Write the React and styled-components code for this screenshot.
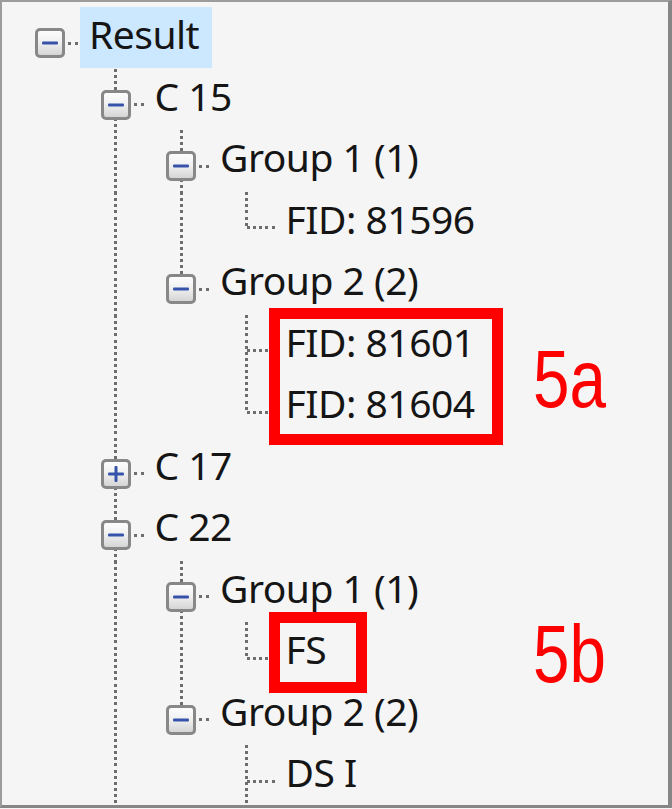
import React from "react";
import styled, { createGlobalStyle, css } from "styled-components";

const Global = createGlobalStyle`
  html, body { margin: 0; padding: 0; background: #f5f5f5; }
  #root { width: 672px; height: 809px; }
`;

const CELL = 65.5;
const ROW_H = 61.5;
const LINE_Y = 36;
const DOT = "#6e6e6e";

const vDots = css`
  background: repeating-linear-gradient(to bottom, ${DOT} 0 3px, transparent 3px 6.15px);
`;
const hDots = css`
  background: repeating-linear-gradient(to right, ${DOT} 0 3px, transparent 3px 6.15px);
`;

const Panel = styled.div`
  position: relative;
  box-sizing: border-box;
  width: 672px;
  height: 808px;
  overflow: hidden;
  background: #f5f5f5;
  border-style: solid;
  border-color: #9c9c9c #868686 #868686 #9c9c9c;
  border-width: 2px 4px 3px 2px;
  padding: 5px 0 0 15.25px;
`;

const Tree = styled.div`
  display: flex;
  flex-direction: column;
`;

const Row = styled.div`
  display: flex;
  height: ${ROW_H}px;
  flex: none;
`;

const Guide = styled.div`
  position: relative;
  width: ${CELL}px;
  flex: none;
  ${(p) =>
    p.$line &&
    css`
      &::before {
        content: "";
        position: absolute;
        left: ${CELL / 2 - 1.5}px;
        top: 0;
        bottom: 0;
        width: 3px;
        ${vDots}
      }
    `}
`;

const Connector = styled.div`
  position: relative;
  width: 62.75px;
  flex: none;
  display: flex;
  align-items: flex-start;
  padding: 21.5px 0 0 18.25px;
  box-sizing: border-box;
  &::before {
    content: "";
    display: ${(p) => (p.$root ? "none" : "block")};
    position: absolute;
    left: ${CELL / 2 - 1.5}px;
    top: 0;
    width: 3px;
    height: ${(p) => (p.$last ? `${LINE_Y}px` : "100%")};
    ${vDots}
  }
  &::after {
    content: "";
    position: absolute;
    left: ${CELL / 2}px;
    right: 0;
    top: ${LINE_Y - 1.5}px;
    height: 3px;
    ${hDots}
  }
`;

const Toggle = styled.div`
  position: relative;
  z-index: 1;
  box-sizing: border-box;
  width: 30px;
  height: 30px;
  margin: -0.5px 0 0 -0.5px;
  border: 3px solid #888888;
  border-radius: 5px;
  background: linear-gradient(#fdfdfd 0%, #f1f1f1 45%, #d5d5d5 100%);
  &::before {
    content: "";
    position: absolute;
    left: 50%;
    top: 50%;
    width: 16px;
    height: 3px;
    background: #3752ab;
    border-radius: 1px;
    transform: translate(-50%, -50%);
  }
  ${(p) =>
    !p.$open &&
    css`
      &::after {
        content: "";
        position: absolute;
        left: 50%;
        top: 50%;
        width: 3px;
        height: 16px;
        background: #3752ab;
        border-radius: 1px;
        transform: translate(-50%, -50%);
      }
    `}
`;

const Label = styled.div`
  flex: none;
  height: ${ROW_H - 0.5}px;
  box-sizing: border-box;
  padding: 0 13px 0 9px;
  font-family: "Noto Sans", "Open Sans", sans-serif;
  font-size: 39px;
  font-weight: 400;
  letter-spacing: -0.5px;
  line-height: 54px;
  color: #151515;
  white-space: nowrap;
  background: ${(p) => (p.$selected ? "#cce8ff" : "transparent")};
`;

const Mark = styled.div`
  position: absolute;
  box-sizing: border-box;
  border: 11px solid #ff0000;
  pointer-events: none;
`;

const Tag = styled.div`
  position: absolute;
  font-family: "Liberation Sans", Arial, sans-serif;
  font-size: 81px;
  line-height: 81px;
  color: #ff0000;
  white-space: nowrap;
  transform: scaleX(0.81);
  transform-origin: left top;
`;

const data = {
  label: "Result",
  selected: true,
  more: true,
  children: [
    {
      label: "C 15",
      children: [
        { label: "Group 1 (1)", children: [{ label: "FID: 81596" }] },
        {
          label: "Group 2 (2)",
          children: [{ label: "FID: 81601" }, { label: "FID: 81604" }],
        },
      ],
    },
    { label: "C 17", collapsed: true, children: [{ label: "…" }] },
    {
      label: "C 22",
      children: [
        { label: "Group 1 (1)", children: [{ label: "FS" }] },
        { label: "Group 2 (2)", more: true, children: [{ label: "DS I" }] },
      ],
    },
  ],
};

function flatten(node, level, guides, isLast, out) {
  out.push({ node, level, guides, isLast });
  if (node.children && !node.collapsed) {
    const next = level === 0 ? [false] : [...guides, !isLast];
    node.children.forEach((c, i) => {
      const last = i === node.children.length - 1 && !node.more;
      flatten(c, level + 1, next, last, out);
    });
  }
  return out;
}

export default function App() {
  const rows = flatten(data, 0, [], true, []);
  return (
    <>
      <Global />
      <Panel>
        <Tree>
          {rows.map((r, i) => (
            <Row key={i}>
              {r.guides.map((g, j) => (
                <Guide key={j} $line={g} />
              ))}
              <Connector $root={r.level === 0} $last={r.isLast}>
                {r.node.children && <Toggle $open={!r.node.collapsed} />}
              </Connector>
              <Label $selected={r.node.selected}>{r.node.label}</Label>
            </Row>
          ))}
        </Tree>
        <Mark style={{ left: 267, top: 306, width: 234, height: 137 }} />
        <Mark style={{ left: 267, top: 610, width: 98, height: 81 }} />
        <Tag style={{ left: 531, top: 336.5 }}>5a</Tag>
        <Tag style={{ left: 531, top: 611.5 }}>5b</Tag>
      </Panel>
    </>
  );
}
